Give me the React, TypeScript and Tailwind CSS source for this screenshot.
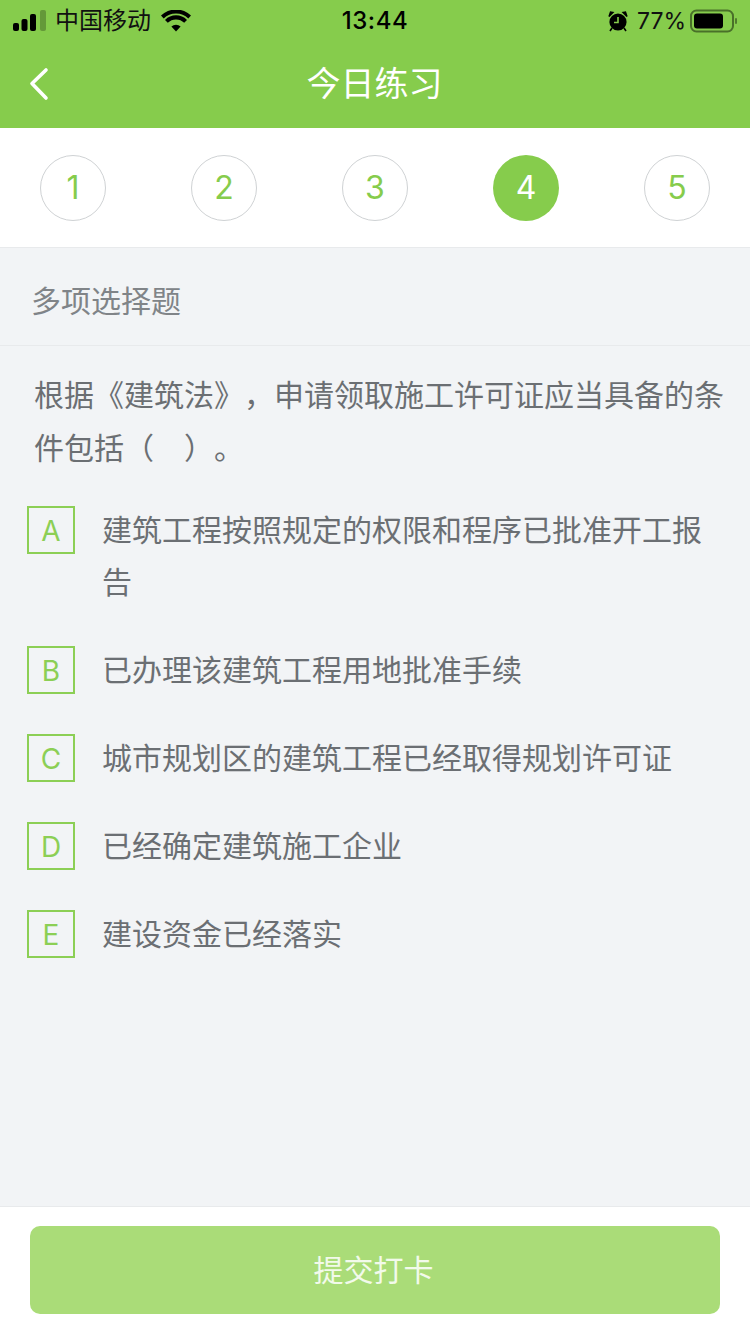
const FONT = "font-['Inter','Noto_Sans_CJK_SC',sans-serif]";

function StatusBar() {
  return (
    <div className="flex h-10 items-center justify-between pl-[13px] pr-[13px] pt-[1px] text-black">
      <div className="flex items-center">
        <svg width="34" height="22" viewBox="0 0 34 22" fill="#000">
          <rect x="0" y="13" width="6" height="8" rx="2" />
          <rect x="8.5" y="9" width="6" height="12" rx="2" />
          <rect x="17" y="4" width="6" height="17" rx="2" />
          <rect x="27" y="0" width="6" height="21" rx="2" opacity="0.25" />
        </svg>
        <span className="ml-[8px] text-[24px] leading-[30px] text-[#111]">中国移动</span>
        <svg className="ml-[10px]" width="30" height="22" viewBox="0 0 30 22" fill="#000">
          <path d="M15 21.5 10.4 16.6a6.6 6.6 0 0 1 9.2 0Z" />
          <path d="M6.8 12.8 4 9.9a15.6 15.6 0 0 1 22 0l-2.8 2.9a11.6 11.6 0 0 0-16.4 0Z" />
          <path d="M2.7 8.4 0 5.6a21.4 21.4 0 0 1 30 0l-2.7 2.8a17.6 17.6 0 0 0-24.6 0Z" />
        </svg>
      </div>
      <span className="absolute left-0 right-0 text-center text-[24px] font-medium leading-[30px] tracking-[0.5px]">13:44</span>
      <div className="relative flex items-center">
        <svg width="20" height="22" viewBox="0 0 20 22">
          <circle cx="10" cy="12" r="8.6" fill="#000" />
          <path d="M10 7v5.5H6" stroke="#86cc4c" strokeWidth="1.6" fill="none" />
          <path d="M1 6.5 5 2.5 2.5 2ZM19 6.5 15 2.5 17.5 2Z" fill="#000" stroke="#000" strokeWidth="1.4" />
          <path d="m4 18-2 3M16 18l2 3" stroke="#000" strokeWidth="1.6" />
        </svg>
        <span className="ml-[9px] text-[23px] leading-[30px] text-[#111]">77%</span>
        <svg className="ml-[4px]" width="47" height="24" viewBox="0 0 47 24">
          <rect x="1" y="1.5" width="42" height="21" rx="5.5" fill="none" stroke="#000" strokeOpacity="0.45" strokeWidth="2" />
          <rect x="4" y="4.5" width="29" height="15" rx="3" fill="#000" />
          <rect x="45" y="9" width="2" height="6" rx="1" fill="#000" fillOpacity="0.4" />
        </svg>
      </div>
    </div>
  );
}

function Steps() {
  return (
    <div className="flex h-[120px] items-center justify-between border-b border-[#e8eaec] bg-white pl-10 pr-10">
      {[1, 2, 3, 4, 5].map((n) => (
        <div
          key={n}
          className={
            n === 4
              ? "flex h-[66px] w-[66px] items-center justify-center rounded-full bg-[#86cc4c] text-[32px] text-white"
              : "flex h-[66px] w-[66px] items-center justify-center rounded-full border border-[#cfd2d4] text-[32px] text-[#86cc4c]"
          }
        >
          {n}
        </div>
      ))}
    </div>
  );
}

function Option({ letter, text }: { letter: string; text: string }) {
  return (
    <div className="flex items-start">
      <div className="flex h-12 w-12 shrink-0 items-center justify-center border-2 border-[#8ccf55] pt-[1px] text-[28px] text-[#8ccf55]">
        {letter}
      </div>
      <p className="ml-[27px] mt-[-2px] flex-1 text-[30px] leading-[52px] text-[#6b6f73]">{text}</p>
    </div>
  );
}

export default function App() {
  return (
    <div className={`${FONT} flex h-[1334px] w-[750px] flex-col overflow-hidden bg-[#f2f4f6]`}>
      <header className="h-[128px] shrink-0 bg-[#86cc4c]">
        <StatusBar />
        <div className="relative flex h-[88px] items-center justify-center">
          <svg className="absolute left-[28px] top-[27px]" width="22" height="34" viewBox="0 0 22 34" fill="none" stroke="#fff" strokeWidth="3.6" strokeLinecap="round" strokeLinejoin="round">
            <path d="M18 3 4 16.5 18 31" />
          </svg>
          <span className="mt-[-1px] pr-[1px] text-[34px] leading-[40px] text-white">今日练习</span>
        </div>
      </header>
      <Steps />
      <div className="flex h-[98px] shrink-0 items-center border-b border-[#e8eaec] pl-[31px] pt-[10px] text-[30px] text-[#808488]">多项选择题</div>
      <main className="flex-1 pl-[27px] pr-[24px]">
        <p className="mt-[23px] pl-[7px] text-[30px] leading-[53px] text-[#6b6f73] [text-spacing-trim:space-all]">根据《建筑法》，申请领取施工许可证应当具备的条件包括（　）。</p>
        <div className="mt-[31px] flex flex-col gap-[38px]">
          <Option letter="A" text="建筑工程按照规定的权限和程序已批准开工报告" />
          <Option letter="B" text="已办理该建筑工程用地批准手续" />
          <Option letter="C" text="城市规划区的建筑工程已经取得规划许可证" />
          <Option letter="D" text="已经确定建筑施工企业" />
          <Option letter="E" text="建设资金已经落实" />
        </div>
      </main>
      <footer className="h-[128px] shrink-0 border-t border-[#e8eaec] bg-white px-[30px] pt-[19px]">
        <div className="flex h-[88px] items-center justify-center rounded-[10px] bg-[#aadc78] pr-[3px] text-[30px] text-white/85">提交打卡</div>
      </footer>
    </div>
  );
}
